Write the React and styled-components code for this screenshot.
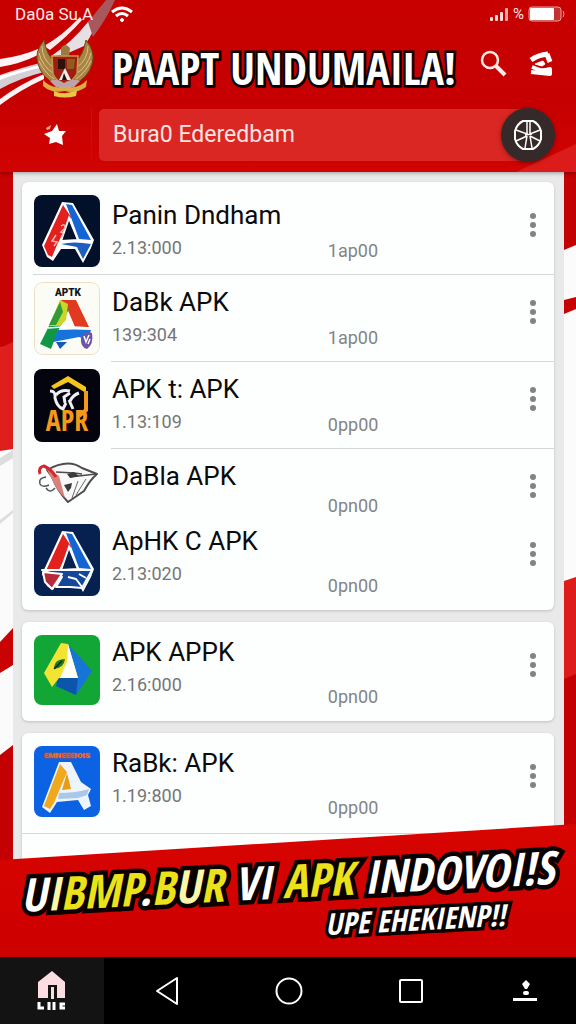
import React from 'react';
import styled, { createGlobalStyle } from 'styled-components';

const GlobalStyle = createGlobalStyle`
    * {
        box-sizing: border-box;
    }

    body {
        margin: 0;
        background: #c80000;
        font-family: Roboto, 'Liberation Sans', sans-serif;
    }

    button {
        border: 0;
        padding: 0;
        background: none;
        cursor: pointer;
        font: inherit;
    }
`;

const Screen = styled.div`
    min-height: 100vh;
    display: flex;
    flex-direction: column;
    overflow: hidden;
`;

const Header = styled.header`
    position: relative;
    background: linear-gradient(180deg, #c80000, #c60000 60%, #d00402);
    padding-bottom: 11px;
    box-shadow: 0 1px 4px rgba(0, 0, 0, 0.35);
    z-index: 1;
`;

const Ribbon = styled.svg`
    position: absolute;
    top: 0;
    left: 0;
`;

const CornerFold = styled.svg`
    position: absolute;
    right: 0;
    bottom: 0;
`;

const StatusBar = styled.div`
    position: relative;
    display: flex;
    align-items: center;
    height: 28px;
    padding: 0 11px 0 15px;
    color: #ffe9e9;
    font-size: 17px;
`;

const StatusSide = styled.div`
    display: flex;
    align-items: center;
    gap: ${props => props.gap};
    margin-left: ${props => (props.end ? 'auto' : '0')};
`;

const Percent = styled.span`
    font-size: 15px;
`;

const TitleRow = styled.div`
    position: relative;
    display: flex;
    align-items: center;
    height: 80px;
    padding: 0 20px 0 34px;
`;

const OutlinedText = styled.span`
    display: inline-block;
    position: relative;
    z-index: 0;
    white-space: pre;

    &::before {
        content: attr(data-text);
        position: absolute;
        top: 0;
        left: 0;
        z-index: -1;
        color: #0a0000;
        -webkit-text-stroke: ${props => props.outline} #0a0000;
        text-shadow: ${props => props.drop} #0a0000;
    }
`;

const Title = styled.h1`
    flex: 1;
    min-width: 0;
    margin: 0 0 0 16px;
    color: #fff;
    font-family: 'Open Sans Condensed', 'Open Sans', sans-serif;
    font-size: 44px;
    font-weight: 800;
    line-height: 52px;
`;

const HeaderButton = styled.button`
    flex: none;
    display: flex;
    align-items: center;
    justify-content: center;
    width: 30px;
    height: 40px;
    margin: 0 0 8px 18px;
`;

const SearchRow = styled.form`
    position: relative;
    display: flex;
    align-items: center;
    gap: 7px;
    height: 53px;
    padding: 0 21px 0 13px;
`;

const StarButton = styled.button`
    width: 79px;
    height: 53px;
    display: flex;
    align-items: center;
    justify-content: center;
    border-right: 1px solid #cf0c0c;
    padding-left: 6px;
`;

const SearchBox = styled.div`
    flex: 1;
    display: flex;
    align-items: center;
`;

const SearchInput = styled.input`
    flex: 1;
    min-width: 0;
    height: 52px;
    border: 0;
    border-radius: 5px 0 0 5px;
    padding: 0 40px 0 14px;
    background: #da2723;
    color: #ffe4e2;
    font-family: inherit;
    font-size: 23px;
    outline: none;
`;

const RoundButton = styled.button`
    width: 54px;
    height: 54px;
    margin-left: -27px;
    display: flex;
    align-items: center;
    justify-content: center;
    border-radius: 50%;
    background: #352a29;
    box-shadow: 0 1px 4px rgba(60, 0, 0, 0.5);
`;

const Body = styled.main`
    flex: 1;
    display: grid;
    grid-template-columns: 13px 1fr 12px;
`;

const FlagEdge = styled.svg`
    width: 100%;
    height: 100%;
    display: block;
`;

const Panel = styled.div`
    display: flex;
    flex-direction: column;
    gap: 12px;
    padding: 10px 10px 0 9px;
    background: #e9e9ea;
`;

const Card = styled.section`
    padding: 6px 0;
    border-radius: ${props => (props.open ? '6px 6px 0 0' : '6px')};
    background: #fdfefe;
    box-shadow: 0 1px 3px rgba(0, 0, 0, 0.18);
    flex: ${props => (props.open ? '1' : 'none')};
`;

const Divider = styled.hr`
    height: 1px;
    border: 0;
    margin: 0 0 0 ${props => props.inset};
    background: #d5d6d7;
`;

const Row = styled.article`
    display: grid;
    grid-template-columns: 66px 9fr 8fr 24px;
    column-gap: 12px;
    align-items: start;
    min-height: ${props => props.height};
    padding: 7px 9px 0 12px;
`;

const AppIcon = styled.svg`
    display: block;
    width: 66px;
    height: ${props => props.h};
    border-radius: 8px;
`;

const AppText = styled.div`
    padding-top: ${props => (props.high ? '2px' : '5px')};
`;

const AppName = styled.h2`
    margin: 0;
    color: #0b0b0b;
    font-size: 26px;
    font-weight: 400;
    line-height: 30px;
    white-space: nowrap;
`;

const AppSize = styled.p`
    margin: 3px 0 0;
    color: #757676;
    font-size: 18px;
    line-height: 30px;
`;

const AppMeta = styled.span`
    margin-top: ${props => props.drop};
    color: #838585;
    font-size: 18px;
    line-height: 20px;
`;

const MoreButton = styled.button`
    display: flex;
    flex-direction: column;
    align-items: center;
    justify-content: center;
    gap: 3px;
    height: 60px;
`;

const Dot = styled.span`
    width: 6px;
    height: 6px;
    border-radius: 50%;
    background: #828484;
`;

const Banner = styled.section`
    position: relative;
    z-index: 1;
    height: 133px;
    margin-top: -36px;
    padding: 30px 18px 0 21px;
    background: linear-gradient(180deg, #d80500, #cd0000);
    clip-path: polygon(0 36px, 100% 0, 100% 100%, 0 100%);
`;

const BannerText = styled.div`
    display: flex;
    flex-direction: column;
    transform: rotate(-3deg);
    color: #fff;
    font-family: 'Open Sans Condensed', 'Open Sans', sans-serif;
    font-style: italic;
    font-weight: 800;
`;

const BannerLine = styled.p`
    margin: 0;
    font-size: 46px;
    line-height: 52px;
`;

const BannerSub = styled.p`
    margin: 0 54px 0 0;
    align-self: flex-end;
    font-size: 30px;
    line-height: 40px;
`;

const Fill = styled.span`
    color: ${props => props.paint};
`;

const NavBar = styled.nav`
    display: grid;
    grid-template-columns: 104fr 126fr 118fr 126fr 102fr;
    height: 67px;
    background: #000;
`;

const NavButton = styled.button`
    display: flex;
    align-items: center;
    justify-content: center;
    background: ${props => (props.active ? '#141313' : '#000')};
`;

const YELLOW = '#ece21a';
const WHITE = '#fff';

const bannerParts = [
    ['U', WHITE],
    ['I', '#fbf7a8'],
    ['BMP', YELLOW],
    ['.', WHITE],
    ['B', YELLOW],
    ['U', '#fbf7a8'],
    ['R', YELLOW],
    [' VI ', WHITE],
    ['APK', YELLOW],
    [' INDOVOI!S', WHITE],
];

function BlueRedIcon({ bg, fold }) {
    return (
        <AppIcon h="72px" viewBox="0 0 66 72" preserveAspectRatio="none">
            <rect width="66" height="72" fill={bg} />
            <path d="M28 7 L39 8 L60 45 L57 53 L49 68 L41 54 L27 54 L19 66 L13 62 L8 50 Z" fill="#fff" />
            <path d="M29 10 L37 22 L23 50 L18 62 L14 60 L10 51 Z" fill="#e2211f" />
            <path d="M32 9 L38 10 L57 45 L45 44 Z" fill="#1465d2" />
            <path d="M35 23 L44 45 L27 46 Z" fill={bg} stroke="#fff" strokeWidth="2" />
            <path d="M27 49 Q40 46 57 49 L49 64 L43 52 Z" fill="#1c5fc0" />
            {fold ? (
                <g fill="none" stroke="#fff" strokeWidth="2" strokeLinejoin="round">
                    <path d="M8 46 L58 46 L48 64 L36 63 L22 63 L28 53 L18 50 Z" fill="#12479a" />
                    <path d="M34 53 L42 55 L48 63 M45 50 L52 54" />
                    <path d="M9 48 L28 50 L18 65 L11 58 Z" fill="#b82a3b" />
                </g>
            ) : (
                <path d="M27 31 Q31 28 31 33 L27 37 Q31 38 27 42 M22 40 L18 46 L23 47 L20 51" fill="none" stroke="#f9b5b0" strokeWidth="1.5" />
            )}
        </AppIcon>
    );
}

function ColorfulIcon() {
    return (
        <AppIcon h="73px" viewBox="0 0 66 73" preserveAspectRatio="none">
            <rect x="0.5" y="0.5" width="65" height="72" rx="8" fill="#fbfcf6" stroke="#eedfc4" />
            <text x="34" y="14" textAnchor="middle" fontFamily="Roboto, sans-serif" fontWeight="900" fontSize="10" fill="#15151c">APTK</text>
            <path d="M27 18 L42 18 L55 45 L41 45 L33 26 Z" fill="#e23a20" />
            <path d="M27 18 L35 27 L24 49 L17 67 L6 62 L14 46 Z" fill="#119743" />
            <path d="M26 18 L34 22 L32 38 L26 44 L15 44 Z" fill="#c7d629" />
            <path d="M26 20 L29 30 L22 43 L15 43 Z" fill="#329b37" />
            <path d="M24 48 Q40 47 57 48 L54 58 Q48 56 45 55 L19 60 Z" fill="#1773dc" />
            <path d="M22 60 L33 60 L26 67 Z" fill="#1657ba" />
            <path d="M47 56 Q51 48 58 51 Q60 62 53 67 Q46 65 47 56 Z" fill="#6b55a6" />
            <path d="M50 54 L52 60 L55 53 M54 62 L56 57" fill="none" stroke="#fff" strokeWidth="1.5" />
            <path d="M14 46 Q36 44 55 46" fill="none" stroke="#fff" strokeWidth="1.5" />
        </AppIcon>
    );
}

function OrangeIcon() {
    return (
        <AppIcon h="73px" viewBox="0 0 66 73" preserveAspectRatio="none">
            <rect width="66" height="73" fill="#04040f" />
            <path d="M17 17 L34 7 L52 18 L52 24 L34 13 L20 20 Z" fill="#f6c51d" />
            <path d="M52 22 L52 41 L45 47" fill="none" stroke="#f29a1b" strokeWidth="4" />
            <path d="M16 22 Q22 22 21 29 Q23 38 29 40 L32 34" fill="none" stroke="#eef0f6" strokeWidth="3" />
            <path d="M22 26 Q27 20 36 22 M36 24 L30 28 L31 34 M35 31 L39 40 M36 32 Q39 26 45 24" fill="none" stroke="#eef0f6" strokeWidth="3" />
            <text x="33" y="62" textAnchor="middle" fontFamily="'Open Sans Condensed', sans-serif" fontWeight="800" fontSize="28" fill="#f39a1d">APR</text>
        </AppIcon>
    );
}

function SketchIcon() {
    return (
        <AppIcon h="60px" viewBox="0 0 66 60">
            <path d="M13 14 Q34 2 48 12 L63 18 Q56 24 50 35 L34 46 Q24 36 18 21 Z" fill="#f9f9f9" stroke="#4c4c4f" strokeWidth="2" strokeLinejoin="round" />
            <path d="M12 12 L25 20 L31 42 Q22 34 17 21 Z" fill="#d8817d" />
            <path d="M6 18 Q4 11 10 10 Q17 13 22 21" fill="none" stroke="#d8262a" strokeWidth="3" />
            <path d="M22 16 L40 17 L48 18 M36 21 L62 18" fill="none" stroke="#4b4b4d" strokeWidth="1.5" />
            <path d="M33 18 L40 16 L45 20 L36 22 Z M30 29 L38 27 L37 32 L34 36 Z" fill="#3b3b3d" />
            <path d="M44 25 L38 42 M52 23 L42 39" stroke="#6b6b6d" strokeWidth="1" />
            <path d="M12 21 Q4 22 6 28 Q8 32 15 29 M12 32 Q16 38 21 32" fill="none" stroke="#4d5358" strokeWidth="1.5" />
        </AppIcon>
    );
}

function GreenIcon() {
    return (
        <AppIcon h="70px" viewBox="0 0 66 70" preserveAspectRatio="none">
            <rect width="66" height="70" fill="#12a637" />
            <path d="M34 9 L58 36 L42 60 L22 51 L26 42 Z" fill="#1675d6" />
            <path d="M24 43 L44 42 L42 60 L22 51 Z" fill="#0d55ab" />
            <path d="M27 8 L34 9 L44 43 L25 43 L18 52 L10 38 Z" fill="#f3e332" />
            <path d="M34 9 L44 43 L26 43 L33 27 Z" fill="#fdfdf5" />
            <path d="M20 34 Q20 24 31 24 Q30 33 20 34 Z" fill="#237a25" />
            <path d="M20 34 L28 26" stroke="#0b2d12" strokeWidth="1.5" />
        </AppIcon>
    );
}

function BlueIcon() {
    return (
        <AppIcon h="71px" viewBox="0 0 66 71" preserveAspectRatio="none">
            <rect width="66" height="71" fill="#0b63e4" />
            <text x="33" y="12" textAnchor="middle" fontFamily="Roboto, sans-serif" fontWeight="900" fontSize="8" fill="#ff9a45" stroke="#d3461d" strokeWidth="0.5">EMNEEEIOIS</text>
            <path d="M25 16 L37 16 L47 36 L57 43 L54 49 L57 60 L50 64 L44 54 L23 56 L16 67 L8 61 Z" fill="#eef4fb" />
            <path d="M26 18 L33 26 L20 57 L16 63 L10 60 Z" fill="#f0a91d" />
            <path d="M33 27 L37 43 L28 44 Z" fill="#e99b13" />
            <path d="M25 47 Q42 47 55 43 L53 49 L44 52 L24 53 Z" fill="#a9c8ea" />
        </AppIcon>
    );
}

function MoreMenu({ name }) {
    return (
        <MoreButton type="button" aria-label={`More options for ${name}`}>
            <Dot />
            <Dot />
            <Dot />
        </MoreButton>
    );
}

function AppRow({ icon, name, size, meta, high, drop = '46px', height = '86px' }) {
    return (
        <Row height={height}>
            {icon}
            <AppText high={high}>
                <AppName>{name}</AppName>
                {size && <AppSize>{size}</AppSize>}
            </AppText>
            <AppMeta drop={drop}>{meta}</AppMeta>
            <MoreMenu name={name} />
        </Row>
    );
}

function Garuda() {
    return (
        <svg width="62" height="60" viewBox="0 0 62 60">
            <g fill="#a98445" stroke="#6c4a1d" strokeWidth="1">
                <path d="M10 2 Q0 14 4 26 Q8 40 22 46 L21 24 Q13 18 10 2 Z" />
                <path d="M52 2 Q62 14 58 26 Q54 40 40 46 L41 24 Q49 18 52 2 Z" />
            </g>
            <g fill="none" stroke="#dcc287" strokeWidth="1">
                <path d="M8 8 Q8 22 20 30 M5 15 Q8 28 20 36 M5 23 Q10 34 20 41" />
                <path d="M54 8 Q54 22 42 30 M57 15 Q54 28 42 36 M57 23 Q52 34 42 41" />
            </g>
            <path d="M27 10 Q31 4 36 10 L35 19 L27 19 Z" fill="#9a7b3d" />
            <path d="M18 18 L44 18 L43 36 Q38 44 31 47 Q22 43 19 36 Z" fill="#a01d13" stroke="#c59a4a" strokeWidth="1.5" />
            <path d="M24 21 L31 21 L31 31 L24 31 Z" fill="#2a130c" />
            <path d="M33 21 L41 21 L40 31 L33 31 Z" fill="#8d5c1f" />
            <path d="M31 30 L37 42 L25 42 Z" fill="#f1ece6" />
            <path d="M30 35 L33 42 L28 42 Z" fill="#20140e" />
            <path d="M9 42 Q18 52 31 48 Q44 52 53 42 L52 49 Q42 56 31 53 Q18 56 9 48 Z" fill="#dcae41" />
            <path d="M16 43 Q23 39 30 45 Q38 39 46 43 L40 49 L22 49 Z" fill="#bda3a6" />
            <path d="M20 53 Q31 58 43 52 L42 58 Q31 61 20 58 Z" fill="#eac744" />
        </svg>
    );
}

export default function App() {
    const lineText = bannerParts.map(part => part[0]).join('');

    return (
        <Screen>
            <GlobalStyle />
            <Header>
                <Ribbon width="120" height="110" viewBox="0 0 120 110">
                    <path d="M0 59 Q22 56 38 49 L38 55 Q20 64 0 67 Z" fill="#fbf3f5" />
                    <path d="M0 75 Q20 68 44 62 L44 72 Q20 78 0 89 Z" fill="#d3d0d8" />
                    <path d="M0 76 Q20 70 44 64 L44 67 Q20 72 0 80 Z" fill="#fff" />
                    <path d="M0 99 Q20 84 44 74 L44 79 Q20 90 0 105 Z" fill="#faf2f4" />
                    <path d="M44 46 Q62 36 80 17 L82 20 Q68 36 50 50 Z" fill="#f8e9ea" />
                    <path d="M50 57 Q72 42 88 22 L98 14 Q96 30 84 46 L66 54 Z" fill="#e6e0e6" />
                    <path d="M88 22 L106 0 L115 0 Q106 20 93 37 Z" fill="#a8575d" />
                </Ribbon>
                <CornerFold width="60" height="28" viewBox="0 0 60 28">
                    <path d="M0 28 L60 0 L60 28 Z" fill="#dc1c1a" />
                </CornerFold>
                <StatusBar>
                    <StatusSide gap="18px">
                        <span>Da0a Su A</span>
                        <svg width="22" height="17" viewBox="0 0 22 17" fill="none" stroke="#fff" strokeWidth="3">
                            <path d="M1 6 Q11 -2 21 6" />
                            <path d="M5 10 Q11 5 17 10" />
                            <circle cx="11" cy="14" r="1.5" fill="#fff" strokeWidth="1" />
                        </svg>
                    </StatusSide>
                    <StatusSide gap="4px" end>
                        <svg width="19" height="13" viewBox="0 0 19 13" fill="#ffd9d9">
                            <rect x="0" y="9" width="3" height="4" rx="1" />
                            <rect x="5" y="7" width="3" height="6" rx="1" />
                            <rect x="10" y="4" width="3" height="9" rx="1" />
                            <rect x="15" y="0" width="3" height="13" rx="1" fill="#f2a3a3" />
                        </svg>
                        <Percent>%</Percent>
                        <svg width="37" height="16" viewBox="0 0 37 16">
                            <rect x="1" y="1" width="32" height="14" rx="3" fill="#c23030" stroke="#f0a0a0" />
                            <rect x="2" y="2" width="24" height="12" rx="1" fill="#fff" />
                            <path d="M35 5 Q37 8 35 11" fill="none" stroke="#f0a0a0" />
                        </svg>
                    </StatusSide>
                </StatusBar>
                <TitleRow>
                    <Garuda />
                    <Title>
                        <OutlinedText outline="5px" drop="1px 3px 0" data-text="PAAPT UNDUMAILA!">PAAPT UNDUMAILA!</OutlinedText>
                    </Title>
                    <HeaderButton type="button" aria-label="Search">
                        <svg width="28" height="28" viewBox="0 0 28 28" fill="none" stroke="#ffe9e6">
                            <circle cx="11" cy="10" r="8" strokeWidth="2.5" />
                            <path d="M17 16 L26 25" strokeWidth="4" />
                        </svg>
                    </HeaderButton>
                    <HeaderButton type="button" aria-label="Refresh">
                        <svg width="26" height="28" viewBox="0 0 26 28" fill="none" stroke="#fff" strokeWidth="5" strokeLinejoin="round">
                            <path d="M3 10 Q10 5 20 4 M19 4 L22 12" />
                            <path d="M3 22 L22 24 L22 19 Q15 21 12 20 L4 17" strokeWidth="4" />
                            <path d="M7 14 L15 11 L17 14 L14 16 Z" fill="#fff" strokeWidth="1" />
                        </svg>
                    </HeaderButton>
                </TitleRow>
                <SearchRow>
                    <StarButton type="button" aria-label="Favourites">
                        <svg width="22" height="24" viewBox="0 0 22 24" fill="#fff">
                            <path d="M13 1 L15 8 L22 8 L18 13 L19 22 L12 19 L5 21 L6 15 L0 11 L8 8 Z" />
                            <path d="M2 5 L7 2 L6 6 L3 7 Z" fill="#ff9d96" />
                        </svg>
                    </StarButton>
                    <SearchBox>
                        <SearchInput type="text" aria-label="Search apps" defaultValue="Bura0 Ederedbam" />
                        <RoundButton type="button" aria-label="Browse">
                            <svg width="30" height="32" viewBox="0 0 30 32" fill="none" stroke="#fff" strokeWidth="2">
                                <path d="M10 2 L20 2 Q26 5 28 12 L28 20 Q26 27 20 30 L10 30 Q4 27 2 20 L2 12 Q4 5 10 2 Z" />
                                <path d="M14 2 L14 15 L3 11 M17 2 L17 15 L27 11 M12 16 L19 15 M14 17 L3 22 M14 17 L12 29 M17 17 L19 29 M17 17 L27 22" strokeWidth="1.5" />
                            </svg>
                        </RoundButton>
                    </SearchBox>
                </SearchRow>
            </Header>

            <Body>
                <FlagEdge viewBox="0 0 13 688" preserveAspectRatio="none">
                    <rect width="13" height="688" fill="#fbfbfb" />
                    <path d="M0 0 H13 V172 L0 176 Z" fill="#c70202" />
                    <path d="M0 176 L13 170 V277 L0 279 Z" fill="#de1f1c" />
                    <path d="M0 286 L13 278 V286 L0 294 Z M0 348 L13 338 V341 L0 352 Z" fill="#dcdede" />
                    <path d="M0 470 L13 456 V493 L0 501 Z" fill="#c90202" />
                    <path d="M0 583 L13 573 V688 H0 Z" fill="#c40101" />
                </FlagEdge>
                <Panel>
                    <Card>
                        <AppRow icon={<BlueRedIcon bg="#031029" />} name="Panin Dndham" size="2.13:000" meta="1ap00" />
                        <Divider inset="11px" />
                        <AppRow icon={<ColorfulIcon />} name="DaBk APK" size="139:304" meta="1ap00" />
                        <Divider inset="89px" />
                        <AppRow icon={<OrangeIcon />} name="APK t: APK" size="1.13:109" meta="0pp00" />
                        <Divider inset="89px" />
                        <AppRow icon={<SketchIcon />} name="DaBla APK" meta="0pn00" drop="40px" height="68px" />
                        <AppRow icon={<BlueRedIcon bg="#062150" fold />} name="ApHK C APK" size="2.13:020" meta="0pn00" high drop="52px" height="87px" />
                    </Card>
                    <Card>
                        <AppRow icon={<GreenIcon />} name="APK APPK" size="2.16:000" meta="0pn00" high drop="52px" height="87px" />
                    </Card>
                    <Card open>
                        <AppRow icon={<BlueIcon />} name="RaBk: APK" size="1.19:800" meta="0pp00" high drop="52px" height="94px" />
                        <Divider inset="0" />
                    </Card>
                </Panel>
                <FlagEdge viewBox="0 0 12 688" preserveAspectRatio="none">
                    <rect width="12" height="688" fill="#fbfbfb" />
                    <path d="M0 0 H12 V73 L0 78 Z" fill="#c30202" />
                    <path d="M0 128 L12 125 V137 L0 142 Z" fill="#c60202" />
                    <path d="M0 409 L12 405 V508 L0 508 Z" fill="#de1c1a" />
                    <path d="M0 507 L12 502 V688 H0 Z" fill="#c40101" />
                </FlagEdge>
            </Body>

            <Banner>
                <BannerText>
                    <BannerLine>
                        <OutlinedText outline="9px" drop="0 2px 0" data-text={lineText}>
                            {bannerParts.map(([text, paint], i) => (
                                <Fill key={i} paint={paint}>{text}</Fill>
                            ))}
                        </OutlinedText>
                    </BannerLine>
                    <BannerSub>
                        <OutlinedText outline="7px" drop="0 1px 0" data-text="UPE EHEKIENP!!">UPE EHEKIENP!!</OutlinedText>
                    </BannerSub>
                </BannerText>
            </Banner>

            <NavBar>
                <NavButton type="button" aria-label="Home" active>
                    <svg width="30" height="42" viewBox="0 0 30 42">
                        <path d="M15 1 L28 12 L28 28 L20 28 L20 15 L11 15 L11 28 L1 28 L1 12 Z" fill="#fbdde2" />
                        <rect x="14" y="17" width="3" height="12" fill="#fbdde2" />
                        <path d="M2 32 V38 H7 M12 32 V40 M17 32 V40 M28 34 H24 V38 H28" fill="none" stroke="#fff" strokeWidth="3" />
                    </svg>
                </NavButton>
                <NavButton type="button" aria-label="Back">
                    <svg width="24" height="30" viewBox="0 0 24 30" fill="none" stroke="#fff" strokeWidth="2" strokeLinejoin="round">
                        <path d="M22 2 L22 28 L2 15 Z" />
                    </svg>
                </NavButton>
                <NavButton type="button" aria-label="Overview">
                    <svg width="28" height="28" viewBox="0 0 28 28" fill="none" stroke="#fff" strokeWidth="2">
                        <circle cx="14" cy="14" r="12.5" />
                    </svg>
                </NavButton>
                <NavButton type="button" aria-label="Recent apps">
                    <svg width="26" height="26" viewBox="0 0 26 26" fill="none" stroke="#fff" strokeWidth="2">
                        <rect x="2" y="2" width="22" height="22" rx="1" />
                    </svg>
                </NavButton>
                <NavButton type="button" aria-label="Downloads">
                    <svg width="26" height="24" viewBox="0 0 26 24" fill="#fff">
                        <path d="M14 1 L18 5 L15 10 L13 10 L10 5 Z" />
                        <rect x="11" y="12" width="6" height="4" rx="2" />
                        <rect x="1" y="19" width="24" height="3" />
                    </svg>
                </NavButton>
            </NavBar>
        </Screen>
    );
}
